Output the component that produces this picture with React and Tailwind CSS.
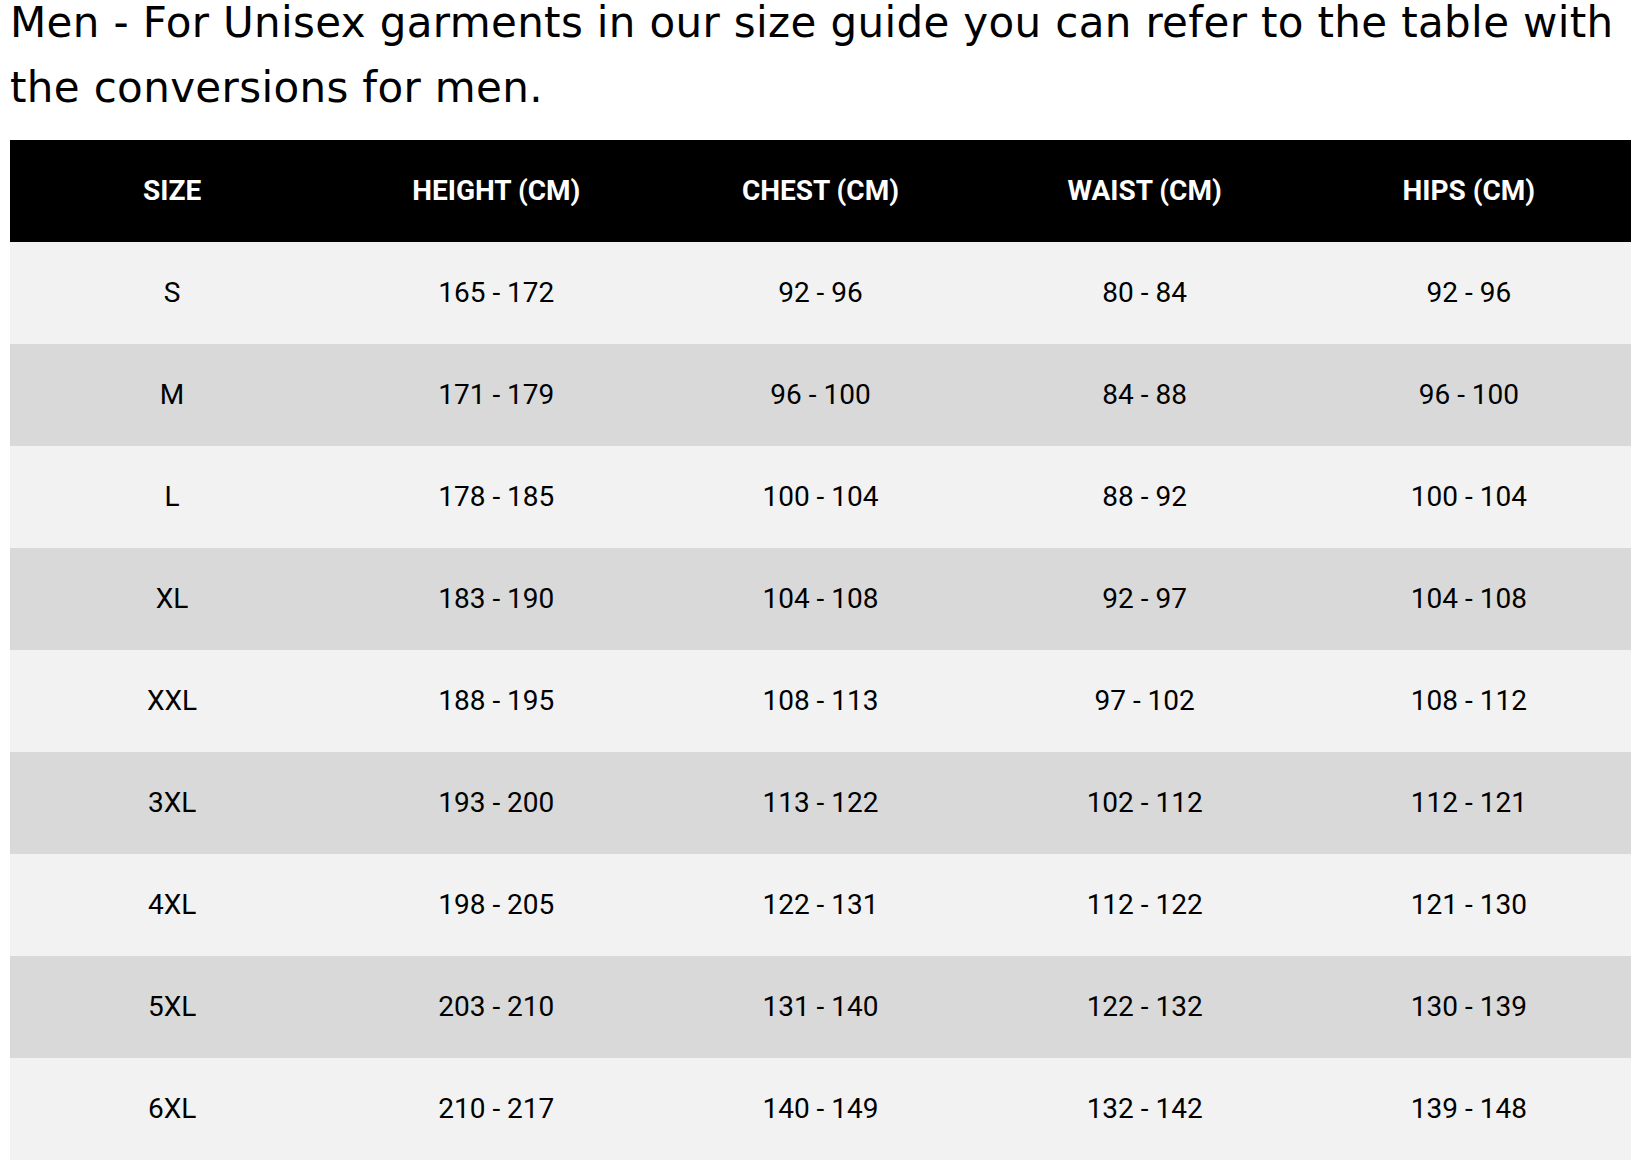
const rows = [
  ['S', '165 - 172', '92 - 96', '80 - 84', '92 - 96'],
  ['M', '171 - 179', '96 - 100', '84 - 88', '96 - 100'],
  ['L', '178 - 185', '100 - 104', '88 - 92', '100 - 104'],
  ['XL', '183 - 190', '104 - 108', '92 - 97', '104 - 108'],
  ['XXL', '188 - 195', '108 - 113', '97 - 102', '108 - 112'],
  ['3XL', '193 - 200', '113 - 122', '102 - 112', '112 - 121'],
  ['4XL', '198 - 205', '122 - 131', '112 - 122', '121 - 130'],
  ['5XL', '203 - 210', '131 - 140', '122 - 132', '130 - 139'],
  ['6XL', '210 - 217', '140 - 149', '132 - 142', '139 - 148'],
]

const headers = ['SIZE', 'HEIGHT (CM)', 'CHEST (CM)', 'WAIST (CM)', 'HIPS (CM)']

export default function App() {
  return (
    <div className="min-h-screen bg-white px-[10px] pr-[11px]">
      {/* Intro */}
      <p className="flex flex-col gap-[20px] whitespace-nowrap text-[42px] leading-[45px] tracking-[0.35px] text-black [font-family:'DejaVu_Sans',sans-serif]">
        <span>Men - For Unisex garments in our size guide you can refer to the table with</span>
        <span>the conversions for men.</span>
      </p>

      {/* Size table */}
      <table className="mt-[30px] w-full table-fixed border-collapse [font-family:Roboto,sans-serif] text-[28px]">
        <thead>
          <tr className="h-[102px] bg-black text-white">
            {headers.map((h) => (
              <th key={h} className="text-center font-bold">
                {h}
              </th>
            ))}
          </tr>
        </thead>
        <tbody>
          {rows.map((row, i) => (
            <tr key={row[0]} className={i % 2 === 0 ? 'h-[102px] bg-[#f2f2f2]' : 'h-[102px] bg-[#d9d9d9]'}>
              {row.map((cell, j) => (
                <td key={j} className="text-center text-black">
                  {cell}
                </td>
              ))}
            </tr>
          ))}
        </tbody>
      </table>
    </div>
  )
}
